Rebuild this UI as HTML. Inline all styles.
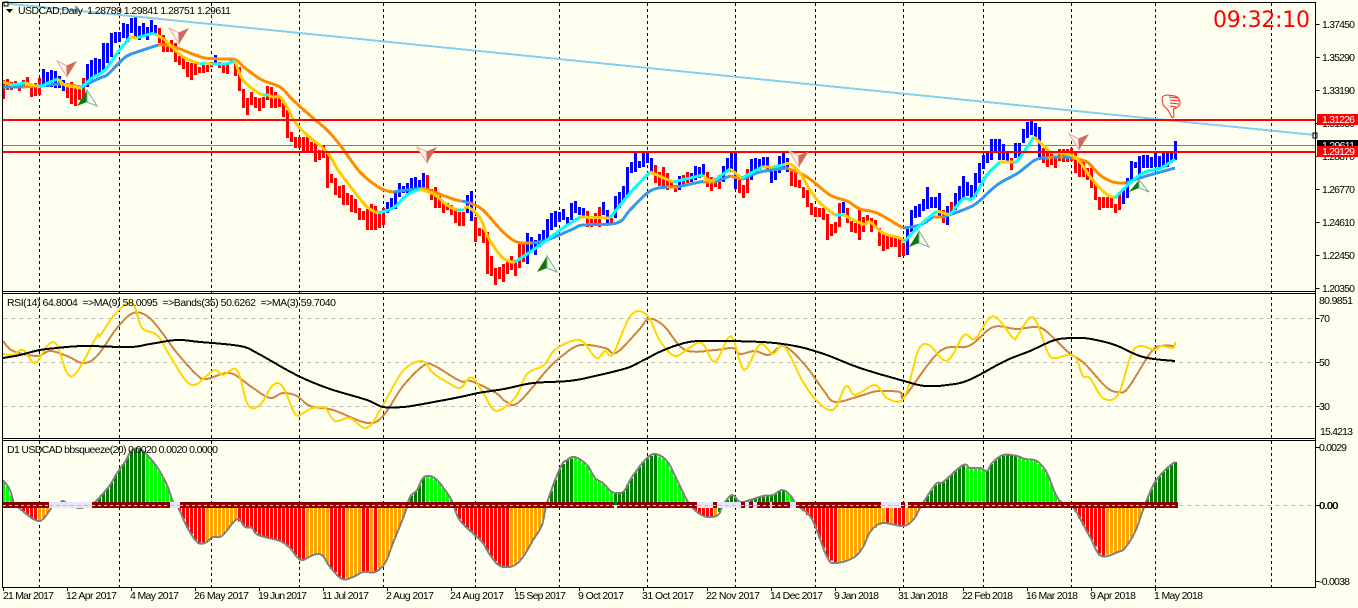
<!DOCTYPE html>
<html lang="en"><head><meta charset="utf-8"><title>USDCAD,Daily</title>
<style>
html,body{margin:0;padding:0;background:#FFFFF0;width:1358px;height:608px;overflow:hidden}
svg{display:block;position:absolute;left:0;top:0}
text{font-family:"Liberation Sans",Arial,sans-serif;font-size:10.5px;fill:#000;white-space:pre}
#grid path{stroke:#000;stroke-width:1;stroke-dasharray:3 3;fill:none}
.lvl{stroke:#C0C0C0;stroke-width:1;stroke-dasharray:4 4;fill:none}
</style></head><body>
<svg xmlns="http://www.w3.org/2000/svg" width="1358" height="608" viewBox="0 0 1358 608">
<rect width="1358" height="608" fill="#FFFFF0"/>
<g id="grid" shape-rendering="crispEdges">
<path d="M39.5 3V587M119.5 3V587M211.5 3V587M299.5 3V587M383.5 3V587M475.5 3V587M559.5 3V587M647.5 3V587M735.5 3V587M815.5 3V587M903.5 3V587M983.5 3V587M1071.5 3V587M1155.5 3V587M1271.5 3V587"/>
</g>
<g shape-rendering="crispEdges">
<path class="lvl" d="M3 318.5H1315M3 362.5H1315M3 406.5H1315M3 505.5H1315"/>
<rect x="3" y="145" width="1312" height="1" fill="#808080"/>
</g>
<g id="hist" shape-rendering="crispEdges"></g>
<g id="band" shape-rendering="crispEdges"></g>
<g id="bars" shape-rendering="crispEdges"></g>
<g id="lines" fill="none" stroke-linejoin="round" stroke-linecap="butt" shape-rendering="crispEdges"></g>
<g id="rsi" fill="none" stroke-linejoin="round" shape-rendering="crispEdges"></g>
<polyline points="6,3.5 1315,135" fill="none" stroke="#87CEEB" stroke-width="2" shape-rendering="crispEdges"/>
<rect x="4" y="2" width="4" height="4" fill="#fff" stroke="#000" stroke-width="1" shape-rendering="crispEdges"/>
<rect x="1313" y="133" width="4" height="5" fill="#fff" stroke="#000" stroke-width="1" shape-rendering="crispEdges"/>
<g shape-rendering="crispEdges">
<rect x="3" y="119" width="1312" height="2" fill="#FF0000"/>
<rect x="3" y="151" width="1312" height="2" fill="#FF0000"/>
</g>
<g>
<polygon points="57,61 66.5,65.5 67,77" fill="#FFF0E8" stroke="#E3AFA5"/><polygon points="77,61 66.5,65.5 67,77" fill="#CD6A60"/>
<polygon points="169,28 178.5,32.5 179,44" fill="#FFF0E8" stroke="#E3AFA5"/><polygon points="189,28 178.5,32.5 179,44" fill="#CD6A60"/>
<polygon points="417,147 426.5,151.5 427,163" fill="#FFF0E8" stroke="#E3AFA5"/><polygon points="437,147 426.5,151.5 427,163" fill="#CD6A60"/>
<polygon points="789,151 798.5,155.5 799,167" fill="#FFF0E8" stroke="#E3AFA5"/><polygon points="809,151 798.5,155.5 799,167" fill="#CD6A60"/>
<polygon points="1069,134 1078.5,138.5 1079,150" fill="#FFF0E8" stroke="#E3AFA5"/><polygon points="1089,134 1078.5,138.5 1079,150" fill="#CD6A60"/>
<polygon points="87,90 77,106 87,102" fill="#0A7A0A"/><polygon points="87,90 97,106 87,102" fill="#FFFFF0" stroke="#6FAF98"/>
<polygon points="547,256 537,272 547,268" fill="#0A7A0A"/><polygon points="547,256 557,272 547,268" fill="#FFFFF0" stroke="#6FAF98"/>
<polygon points="919,231 909,247 919,243" fill="#0A7A0A"/><polygon points="919,231 929,247 919,243" fill="#FFFFF0" stroke="#6FAF98"/>
<polygon points="1139,180 1129,192 1139,188" fill="#0A7A0A"/><polygon points="1139,180 1149,192 1139,188" fill="#FFFFF0" stroke="#6FAF98"/>
</g>
<g fill="#FFFFF0" stroke="#FF2020" stroke-width="1">
<path d="M1162 98Q1163 95 1168 95L1175 96Q1180 98 1180 103Q1180 106 1176 108L1173.5 109L1174 117L1172 117.500L1168 110L1163 105Z"/>
<path d="M1169 97L1178 98M1170 100L1179 101M1170 103L1179 104M1170 106L1176 107" fill="none" stroke-width="1"/>
</g>
<g shape-rendering="crispEdges" fill="none" stroke="#000">
<path d="M2.500 2.500H1315.500V587.500H2.500Z"/>
<path d="M2.500 291.500H1315.500M2.500 293.500H1315.500M2.500 438.500H1315.500M2.500 440.500H1315.500"/>
<path d="M1315.500 24.500h4M1315.500 57.500h4M1315.500 90.500h4M1315.500 123.500h4M1315.500 156.500h4M1315.500 189.500h4M1315.500 222.500h4M1315.500 255.500h4M1315.500 288.500h4M1315.500 318.500h4M1315.500 362.500h4M1315.500 406.500h4M1315.500 505.500h4M1315.500 447.500h4M1315.500 581.500h4"/>
<path d="M3.500 587v4M67.500 587v4M131.500 587v4M195.500 587v4M259.500 587v4M323.500 587v4M387.500 587v4M451.500 587v4M515.500 587v4M579.500 587v4M643.500 587v4M707.500 587v4M771.500 587v4M835.500 587v4M899.500 587v4M963.500 587v4M1027.500 587v4M1091.500 587v4M1155.500 587v4"/>
</g>
<!-- legends -->
<polygon points="6,9 13,9 9.500,13" fill="#000"/>
<text x="18" y="14" textLength="213" lengthAdjust="spacing">USDCAD,Daily  1.28789 1.29841 1.28751 1.29611</text>
<text x="7" y="306" textLength="329" lengthAdjust="spacing">RSI(14) 64.8004  =&gt;MA(9) 58.0095  =&gt;Bands(35) 50.6262  =&gt;MA(3) 59.7040</text>
<text x="7" y="453" textLength="211" lengthAdjust="spacing">D1 USDCAD bbsqueeze(20) 0.0020 0.0020 0.0000</text>
<text x="1213" y="27" textLength="97" lengthAdjust="spacing" style="font-family:'DejaVu Sans',sans-serif;font-size:22px;fill:#FF0000">09:32:10</text>
<!-- price axis -->
<g>
<text x="1322" y="28" textLength="33">1.37450</text>
<text x="1322" y="61" textLength="33">1.35290</text>
<text x="1322" y="94" textLength="33">1.33190</text>
<text x="1322" y="127" textLength="33">1.31030</text>
<text x="1322" y="160" textLength="33">1.28870</text>
<text x="1322" y="193" textLength="33">1.26770</text>
<text x="1322" y="226" textLength="33">1.24610</text>
<text x="1322" y="259" textLength="33">1.22450</text>
<text x="1322" y="292" textLength="33">1.20350</text>
</g>
<g shape-rendering="crispEdges">
<rect x="1317" y="140" width="41" height="6" fill="#000"/>
<rect x="1317" y="114" width="41" height="11" fill="#FF0000"/>
<rect x="1317" y="146" width="41" height="11" fill="#FF0000"/>
</g>
<svg x="1317" y="140" width="41" height="6"><text x="5" y="9" textLength="33" style="fill:#fff">1.29611</text></svg>
<text x="1322" y="123" textLength="33" style="fill:#fff">1.31226</text>
<text x="1322" y="155" textLength="33" style="fill:#fff">1.29129</text>
<!-- rsi axis -->
<text x="1319" y="304" textLength="34">80.9851</text>
<text x="1319" y="322" textLength="11">70</text>
<text x="1319" y="366" textLength="11">50</text>
<text x="1319" y="410" textLength="11">30</text>
<text x="1320" y="435" textLength="33">15.4213</text>
<!-- squeeze axis -->
<text x="1319" y="451" textLength="28">0.0029</text>
<text x="1319" y="509" textLength="19">0.00</text>
<text x="1319.500" y="509" textLength="19">0.00</text>
<text x="1319" y="585" textLength="31">-0.0038</text>
<!-- dates -->
<g>
<text x="3" y="599" textLength="51">21 Mar 2017</text>
<text x="66" y="599" textLength="51">12 Apr 2017</text>
<text x="130" y="599" textLength="49">4 May 2017</text>
<text x="194" y="599" textLength="55">26 May 2017</text>
<text x="258" y="599" textLength="49">19 Jun 2017</text>
<text x="322" y="599" textLength="47">11 Jul 2017</text>
<text x="386" y="599" textLength="48">2 Aug 2017</text>
<text x="450" y="599" textLength="54">24 Aug 2017</text>
<text x="514" y="599" textLength="52">15 Sep 2017</text>
<text x="578" y="599" textLength="46">9 Oct 2017</text>
<text x="642" y="599" textLength="52">31 Oct 2017</text>
<text x="706" y="599" textLength="54">22 Nov 2017</text>
<text x="770" y="599" textLength="53">14 Dec 2017</text>
<text x="834" y="599" textLength="45">9 Jan 2018</text>
<text x="898" y="599" textLength="50">31 Jan 2018</text>
<text x="962" y="599" textLength="51">22 Feb 2018</text>
<text x="1026" y="599" textLength="52">16 Mar 2018</text>
<text x="1090" y="599" textLength="46">9 Apr 2018</text>
<text x="1154" y="599" textLength="49">1 May 2018</text>
</g>
</svg>
<script>
(function(){
var NS="http://www.w3.org/2000/svg";
function el(p,n,a){var e=document.createElementNS(NS,n);for(var k in a)e.setAttribute(k,a[k]);document.getElementById(p).appendChild(e);return e;}
function smooth(s){var p=s.split(" ").map(function(q){return q.split(",").map(Number);});
 if(p.length<3)return s;var out=[];
 for(var k=0;k<p.length-1;k++){var a=p[Math.max(k-1,0)],b=p[k],c=p[k+1],d=p[Math.min(k+2,p.length-1)];
  for(var j=0;j<5;j++){var t=j/5,t2=t*t,t3=t2*t;
   var f=function(m){return 0.5*(2*b[m]+(c[m]-a[m])*t+(2*a[m]-5*b[m]+4*c[m]-d[m])*t2+(3*b[m]-a[m]-3*c[m]+d[m])*t3);};
   out.push(f(0).toFixed(1)+","+f(1).toFixed(1));}}
 out.push(p[p.length-1].join(","));return out.join(" ");}
var barData=[
["#FF0000","80,99 79,90 82,90 81,88 83,91 80,87 77,88 85,97 83,96 78,95"],
["#0000FF","69,87 72,87 70,87 71,88 76,88 80,91"],
["#FF0000","85,98 82,104 85,106 86,100 78,100"],
["#0000FF","64,87 60,80 58,77 59,75 43,70 43,63 33,57 32,43 32,42 23,38 24,42 18,33 17,38 26,40 23,36 27,40 20,33 25,35"],
["#FF0000","28,43 35,52 43,52 40,52 43,62 56,65 58,69 62,77 63,80 63,75 67,73 65,73 65,72 62,67"],
["#0000FF","55,65"],
["#FF0000","62,68 63,73 62,74"],
["#0000FF","58,63"],
["#FF0000","59,76 67,91 89,108 98,115 92,105 97,108 98,111 97,108 86,100 87,108 92,108 98,107 103,117 110,138 132,142 137,148 137,148 137,153 137,153 142,152 142,162 150,160 145,158 153,188 174,183 178,195 186,198 185,205 193,205 195,212 199,213 208,220 211,220 209,230 204,230 206,230 212,228 208,225"],
["#0000FF","202,213 198,210 192,209 183,197 186,193 183,193 178,192 177,192 180,188 173,188"],
["#FF0000","175,193 189,200 187,208 196,208 202,213 203,210 205,215 210,223 212,226 212,226"],
["#0000FF","195,213 191,221"],
["#FF0000","217,242 228,236 229,243 232,274 256,276 268,285 267,279 264,282 260,274 256,270 260,276 243,268 243,262"],
["#0000FF","233,264 237,251 240,255 234,247 230,243 219,240 213,230 211,227 212,222 209,220 217,225 203,220 201,213 207,215 208,218"],
["#FF0000","211,227 218,227 213,225 207,227"],
["#0000FF","202,215 210,223"],
["#FF0000","218,225"],
["#0000FF","196,218 192,208 186,202 167,197 162,173 153,172 161,168 153,167 153,163 158,172"],
["#FF0000","165,183 172,186 167,186 173,190 182,187 185,192"],
["#0000FF","176,190"],
["#FF0000","175,187 172,183"],
["#0000FF","173,182 166,180 167,178 164,177"],
["#FF0000","172,187 177,191 178,187 175,189"],
["#0000FF","166,182 158,172 153,172 153,189"],
["#FF0000","180,193 185,198 169,193"],
["#0000FF","159,180 158,173 159,170 157,167 157,172 170,183 165,180 156,173 153,167 158,172"],
["#FF0000","169,186 172,187 180,188 187,198 190,207 203,215 207,217 208,217 208,220 214,240 224,236 222,233 203,227"],
["#0000FF","202,213"],
["#FF0000","208,223 221,232 223,233 210,240 217,232 215,223 218,232 220,228 228,246 233,251 235,249 237,247 238,247 238,257 243,256"],
["#0000FF","226,255 210,232 206,218 204,217 199,211 187,209 197,208 197,208 193,216"],
["#FF0000","210,223"],
["#0000FF","206,225"],
["#FF0000","202,215"],
["#0000FF","193,210 186,203 176,198 182,196 185,200 173,197 163,183 155,169 152,163 139,160 139,152 139,160 144,160 153,163"],
["#FF0000","158,170"],
["#0000FF","143,158 143,157 129,143 122,138 121,135 123,137 127,157"],
["#FF0000","148,163 150,167 152,165 156,168 149,161 149,162 149,162 148,161 152,173 158,177 162,177 168,180 168,188 184,200 197,210 197,208 197,208 197,208 204,213 192,210"],
["#0000FF","188,204 178,198 161,183 162,168 156,177 155,168 155,168 157,168 153,167 156,168 153,168 153,167 152,163 141,160"]
];
var i=0;
barData.forEach(function(s){s[1].split(" ").forEach(function(p){var v=p.split(",");
 el("bars","rect",{x:2+4*i,y:v[0],width:3,height:v[1]-v[0],fill:s[0]});i++;});});
var O="#FF8C00",B="#3399EE",Y="#FFCC00",C="#00FFFF";
var lines=[
[B,"3,87 23,87"],[O,"23,87 35,86"],[B,"35,86 60,84"],[O,"60,84 70,85 81,87"],
[B,"81,87 100,78 107,75 117,65 127,56 140,51 158,45"],
[O,"158,45 165,45 180,49 190,53 205,58 225,59 236,60 245,68 262,80 280,87 293,100 313,118 327,130 340,145 360,172 380,188 393,192"],
[B,"393,192 423,188"],[O,"423,188 453,199 462,201"],[B,"462,201 470,203"],
[O,"470,203 483,210 503,232 517,242 532,243"],
[B,"532,243 547,240 573,229 583,225 617,223 630,210 650,191 667,187"],[O,"667,187 677,187"],
[B,"677,187 700,182 703,182"],[O,"703,182 715,182"],[B,"715,182 730,176"],[O,"730,176 743,179"],
[B,"743,179 760,172 787,168"],
[O,"787,168 807,177 830,195 847,201 860,209 877,213 903,228"],
[B,"903,228 920,225 933,217"],[O,"933,217 943,217"],
[B,"943,217 963,210 977,203 997,185 1018,173 1035,160 1047,158"],[O,"1047,158 1053,157"],[B,"1053,157 1060,157"],[O,"1060,157 1063,157"],[B,"1063,157 1072,158"],
[O,"1072,158 1087,162 1100,175 1113,182 1125,183"],
[B,"1125,183 1143,177 1157,173 1175,168"],
[Y,"3,82 12,85"],[C,"12,85 25,83"],[Y,"25,83 40,87"],[C,"40,87 50,82 58,79"],[Y,"58,79 65,85 75,87 81,88"],
[C,"81,88 92,78 105,70 118,52 130,37"],[Y,"130,37 137,38"],[C,"137,38 150,34 155,34"],
[Y,"155,34 165,40 175,50 185,58 200,64"],[C,"200,64 205,63"],[Y,"205,63 212,64"],[C,"212,64 225,64 235,61"],
[Y,"235,61 243,80 257,92 263,95"],[C,"263,95 268,95"],
[Y,"268,95 273,97 280,97 287,107 295,122 307,135 327,152 338,170 353,190 367,207 378,213"],
[C,"378,213 393,208 407,195 420,189"],[Y,"420,189 435,195 447,205 457,210"],[C,"457,210 464,210"],
[Y,"464,210 468,207 480,218 488,237 500,255 508,261 515,262"],
[C,"515,262 530,252 547,240 560,230 580,217"],[Y,"580,217 610,218"],[C,"610,218 630,193 650,172"],
[Y,"650,172 673,182"],[C,"673,182 703,175"],[Y,"703,175 708,180 715,180"],[C,"715,180 730,169"],
[Y,"730,169 742,178"],[C,"742,178 762,167"],[Y,"762,167 773,167"],[C,"773,167 783,165"],
[Y,"783,165 790,164 800,173 810,190 820,203 835,215"],[C,"835,215 844,215"],
[Y,"844,215 863,224 870,222 883,233 900,238 904,242"],[C,"904,242 920,225 937,211"],
[Y,"937,211 950,215"],[C,"950,215 963,199 973,198 987,175 1000,162"],[Y,"1000,162 1013,162"],
[C,"1013,162 1018,160 1034,137"],[Y,"1034,137 1046,148 1051,152 1075,157 1091,178 1105,193 1115,198"],
[C,"1115,198 1131,182 1145,172 1161,168 1175,159"]
];
lines.forEach(function(l){el("lines","polyline",{points:smooth(l[1]),stroke:l[0],"stroke-width":3});});
var blk="3,358 20,355 40,350 67,347 87,346 130,347 150,344 177,340 200,342 240,346 257,353 287,370 307,380 333,390 367,400 383,407 403,407 423,404 460,397 478,393 504,389 533,383 569,381 595,376 627,368 642,361 664,350 689,342 715,341 762,342 795,346 824,354 860,368 904,381 925,386 947,385 969,380 1005,361 1030,351 1055,340 1075,338 1091,339 1115,345 1143,357 1175,361";
var brn="3,341 13,351 37,356 50,351 67,356 83,363 97,356 117,328 133,313 147,316 160,330 177,353 197,375 207,379 230,373 253,388 270,398 283,393 297,396 310,406 333,410 367,423 383,416 403,386 423,366 433,365 460,381 471,381 496,393 505,401 518,403 547,370 562,356 580,345 605,348 616,353 638,331 649,319 664,326 685,350 715,350 733,348 740,354 755,351 769,355 784,346 805,365 824,391 835,402 860,396 878,391 900,392 905,396 940,351 969,346 993,327 1016,329 1035,327 1046,331 1068,352 1085,364 1106,387 1118,392 1128,388 1151,352 1161,346 1175,346";
var yel="3,354 13,355 23,350 35,363 48,345 57,345 67,373 77,372 97,336 100,336 115,314 132,303 142,328 157,335 170,356 187,382 197,384 203,379 215,370 223,375 237,370 248,405 260,405 273,385 283,387 295,414 303,413 313,408 325,408 335,421 350,418 367,428 383,405 403,371 422,361 433,373 447,382 460,388 469,378 475,380 485,396 496,411 515,398 527,374 544,365 556,349 580,340 596,358 605,351 613,354 631,315 647,315 660,341 675,356 689,348 702,343 715,362 731,336 744,370 760,344 773,354 784,346 802,380 816,400 833,410 846,386 855,395 875,385 887,398 904,398 918,351 929,345 947,361 964,335 975,339 993,316 1013,338 1018,335 1033,317 1048,353 1055,358 1068,355 1076,358 1083,376 1090,378 1103,398 1118,395 1131,355 1140,346 1155,350 1161,346 1173,348 1175,342";
el("rsi","polyline",{points:smooth(brn),stroke:"#CD853F","stroke-width":2});
el("rsi","polyline",{points:smooth(yel),stroke:"#FFD700","stroke-width":2});
el("rsi","polyline",{points:smooth(blk),stroke:"#000","stroke-width":2});
var env="3,480 10,490 14,503 18,507 25,513 35,520 42,520 50,510 53,505 60,503 63,501 70,505 80,508 90,505 95,502 100,497 110,485 117,473 125,462 132,450 140,449 147,455 157,467 167,485 173,502 178,507 187,527 197,542 205,543 213,537 222,536 237,519 245,527 252,528 258,535 280,541 290,548 297,557 303,560 313,555 322,555 330,567 342,579 353,577 363,572 375,572 385,563 393,543 405,513 410,497 417,490 423,478 430,476 437,480 445,490 452,501 457,515 463,524 477,537 483,543 490,555 500,566 513,566 523,557 533,540 542,525 547,503 560,468 567,460 575,457 587,465 595,478 603,483 612,492 623,492 632,477 645,460 655,454 667,461 677,480 688,502 697,512 707,517 718,515 723,505 732,495 740,502 750,500 763,496 773,495 782,490 790,495 797,505 812,519 827,557 835,563 853,558 863,547 870,532 882,523 903,526 913,520 920,508 930,492 937,483 943,482 963,465 970,468 980,468 987,471 992,463 1003,455 1017,456 1025,459 1037,461 1047,473 1055,493 1061,502 1073,507 1090,537 1101,556 1118,552 1125,548 1135,532 1143,510 1148,497 1155,482 1165,470 1175,462";
var pts=env.split(" ").map(function(p){return p.split(",").map(Number);});
function at(x){for(var k=1;k<pts.length;k++){if(x<=pts[k][0]){var a=pts[k-1],b=pts[k];return a[1]+(b[1]-a[1])*(x-a[0])/(b[0]-a[0]);}}return pts[pts.length-1][1];}
var G="#008000",L="#00FF00",R="#FF0000",A="#FFA500";
var runs=[[16,L],[37,R],[52,A],[92,R],[130,G],[147,G],[176,L],[205,R],[237,A],[305,R],[330,A],[344,R],[363,A],[369,R],[373,A],[377,R],[409,A],[425,G],[454,L],[505,R],[509,R],[547,A],[573,G],[610,L],[614,L],[656,G],[690,L],[708,R],[711,A],[715,R],[718,A],[736,G],[742,L],[775,G],[784,G],[796,L],[836,R],[885,A],[888,R],[892,A],[906,R],[921,A],[966,G],[985,L],[1017,G],[1066,L],[1105,R],[1145,A],[1180,G]];
function col(x){for(var k=0;k<runs.length;k++)if(x<=runs[k][0])return runs[k][1];return G;}
for(var n=0;n<294;n++){var x=3.5+4*n,y=at(x);if(Math.abs(y-505)<1)continue;
 if(n>12&&x<52&&y<505)continue;
 var c=col(x),t=Math.min(y,505),h=Math.abs(y-505);
 el("hist","rect",{x:2+4*n,y:t,width:3,height:h,fill:c});}
el("hist","polyline",{points:smooth(env),fill:"none",stroke:"#808080","stroke-width":2,"stroke-linejoin":"round"});
var lav=[[49,92],[170,180],[697,797],[881,908]];
lav.forEach(function(s){el("band","rect",{x:s[0],y:502,width:s[1]-s[0],height:6,fill:"#E6E6FA"});
 el("band","path",{d:"M"+s[0]+" 505.5H"+s[1],stroke:"#C0C0C0","stroke-dasharray":"4 3",fill:"none"});});
var red=[[3,49],[92,170],[180,614],[617,697],[713,717],[741,745],[749,753],[757,770],[772,790],[796,881],[901,905],[908,1178]];
red.forEach(function(s){el("band","rect",{x:s[0],y:502,width:s[1]-s[0],height:6,fill:"#8B0000"});
 el("band","path",{d:"M"+s[0]+" 505.5H"+s[1],stroke:"#E8C8C8","stroke-dasharray":"3 3",fill:"none"});});
})();
</script>
</body></html>
